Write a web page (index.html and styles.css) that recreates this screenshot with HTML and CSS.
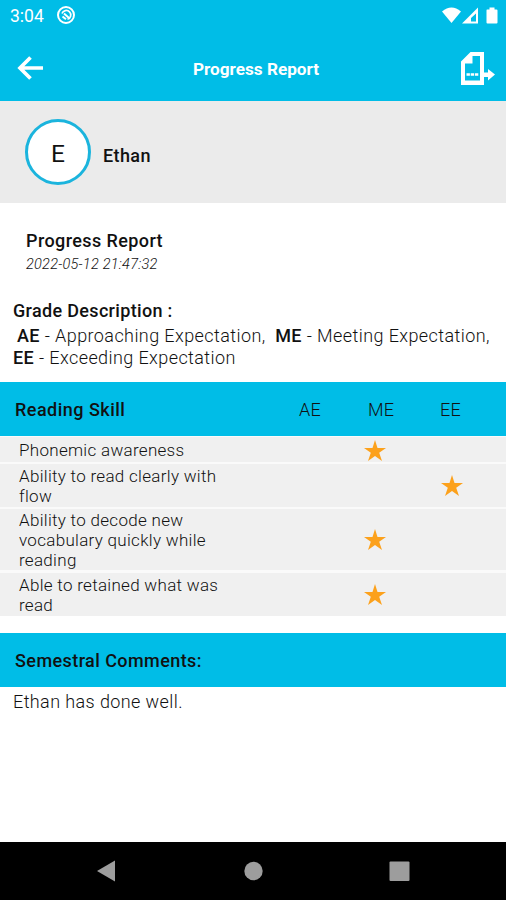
FILE: index.html
```html
<!DOCTYPE html>
<html lang="en">
<head>
<meta charset="utf-8">
<title>Progress Report</title>
<link rel="stylesheet" href="styles.css">
</head>
<body>
<div class="screen">
  <header class="top">
    <div class="status">
      <span class="clock">3:04</span>
      <svg class="status-app" width="20" height="20" viewBox="0 0 20 20" fill="none" stroke="#fff"><circle cx="10" cy="10" r="8" stroke-width="2"/><path d="M6 8.500A4.500 4.500 0 1 1 11.500 14.300" stroke-width="1.700"/><path d="M6.500 11.500L10 14.300M8 8.500L13 13" stroke-width="2"/></svg>
      <svg class="status-icons" width="56" height="18" viewBox="0 0 56 18" fill="#fff"><path d="M0 4.500Q9.500-3.500 19 4.500L9.500 16Z"/><path fill-rule="evenodd" d="M20 16.500L36 .5V16.500ZM29 14.500H34V6.500L29 11Z"/><path d="M45 2.500h2.500V.5h5v2h2q1 0 1 1V15.500q0 1-1 1h-9q-1 0-1-1V3.500q0-1 .5-1Z"/></svg>
    </div>
    <div class="appbar">
      <svg class="back" width="27" height="24" viewBox="0 0 27 24" fill="none" stroke="#fff" stroke-width="3.700"><path d="M13.500 1.500L3 12L13.500 22.500M3 12H26"/></svg>
      <h1 class="title">Progress Report</h1>
      <svg class="export" width="34" height="34" viewBox="0 0 34 34" fill="#fff"><path fill-rule="evenodd" d="M9.500 0H23V33H0V9.500ZM11.500 4V11.500H4V28.500H19V4Z"/><path d="M20 20.500H27V17L34 22.500L27 28.500V25H20Z"/><path d="M5.500 22.500H17.500" stroke="#fff" stroke-width="2.600" stroke-dasharray="3.400 .8"/></svg>
    </div>
  </header>
  <section class="student">
    <div class="avatar">E</div>
    <div class="name">Ethan</div>
  </section>
  <section class="summary">
    <h2 class="report">Progress Report</h2>
    <div class="date">2022-05-12 21:47:32</div>
    <h2 class="grades">Grade Description :</h2>
    <p class="legend"><span class="line first"><b>AE</b> - Approaching Expectation,&nbsp; <b>ME</b> - Meeting Expectation,</span><span class="line second"><b>EE</b> - Exceeding Expectation</span></p>
  </section>
  <section class="skills">
    <div class="row head"><b class="skill-head">Reading Skill</b><span class="ae">AE</span><span class="me">ME</span><span class="ee">EE</span></div>
    <div class="row r1"><span class="skill">Phonemic awareness</span><svg class="star" viewBox="0 0 22 21"><path d="M11 0L13.500 7.900L22 8L15.200 12.800L18 21L11 16L4 21L6.800 12.800L0 8L8.500 7.900Z"/></svg></div>
    <div class="row r2"><span class="skill">Ability to read clearly with<br>flow</span><svg class="star exceeding" viewBox="0 0 22 21"><path d="M11 0L13.500 7.900L22 8L15.200 12.800L18 21L11 16L4 21L6.800 12.800L0 8L8.500 7.900Z"/></svg></div>
    <div class="row r3"><span class="skill">Ability to decode new<br>vocabulary quickly while<br>reading</span><svg class="star" viewBox="0 0 22 21"><path d="M11 0L13.500 7.900L22 8L15.200 12.800L18 21L11 16L4 21L6.800 12.800L0 8L8.500 7.900Z"/></svg></div>
    <div class="row r4"><span class="skill">Able to retained what was<br>read</span><svg class="star" viewBox="0 0 22 21"><path d="M11 0L13.500 7.900L22 8L15.200 12.800L18 21L11 16L4 21L6.800 12.800L0 8L8.500 7.900Z"/></svg></div>
  </section>
  <section class="comments">
    <h2 class="comments-head">Semestral Comments:</h2>
    <p class="comment">Ethan has done well.</p>
  </section>
  <nav class="navbar">
    <svg width="506" height="58" viewBox="0 0 506 58" fill="#9d9d9d"><path d="M97 29L115 18.500V39.500Z"/><circle cx="253.500" cy="29" r="9.200"/><rect x="389.500" y="19.500" width="20" height="19.500" rx="1"/></svg>
  </nav>
</div>
</body>
</html>
```
FILE: styles.css
```css
* { box-sizing: border-box; }
body { margin: 0; background: #fff; font-family: Roboto, sans-serif; color: #111; }
h1, h2, p { margin: 0; }
b, h1, h2 { font-weight: 500; }
.screen { width: 506px; height: 900px; display: flex; flex-direction: column; overflow: hidden; }
.top { height: 101px; flex: none; background: #00bde7; color: #fff; }
.status { height: 36px; display: flex; align-items: flex-start; padding: 5px 8px 0 10px; }
.clock { font-size: 17.5px; line-height: 22px; width: 46px; }
.status-app { flex: none; }
.status-icons { margin: 2px 0 0 auto; }
.appbar { height: 65px; display: flex; align-items: flex-start; justify-content: space-between; padding: 16px 11px 0 17px; }
.back { margin-top: 4px; width: 27px; }
.title { font-size: 17.2px; line-height: 22px; margin: 6px 0 0 7px; font-weight: 700; white-space: nowrap; }
.student { height: 102px; flex: none; background: #ebebeb; display: flex; padding: 18px 25px; }
.avatar { width: 66px; height: 66px; border-radius: 50%; background: #fff; border: 3px solid #1bb4dd; font-size: 24.5px; line-height: 63px; text-align: center; }
.name { font-size: 18px; font-weight: 500; line-height: 22px; margin: 26px 0 0 12px; letter-spacing: .4px; }
.summary { height: 179px; flex: none; padding: 27px 13px 0; }
.report { font-size: 18px; line-height: 22px; margin-left: 13px; letter-spacing: .4px; }
.date { font-size: 14.5px; font-style: italic; font-weight: 300; line-height: 20px; margin: 3px 0 0 13px; letter-spacing: .25px; }
.grades { font-size: 18px; line-height: 22px; margin-top: 25px; letter-spacing: .33px; }
.legend { font-size: 18px; font-weight: 300; line-height: 22px; margin-top: 3px; letter-spacing: .41px; }
.line { display: block; white-space: nowrap; }
.first { padding-left: 4px; }
.skills { flex: none; background: #fafafa; height: 234px; }
.row { display: flex; align-items: center; background: #f0f0f0; font-size: 17px; }
.head { height: 54px; background: #00bde7; padding: 1px 0 0 15px; font-size: 18px; margin-bottom: 1px; }
.skill-head { width: 284px; letter-spacing: .48px; }
.ae, .me, .ee { font-weight: 300; letter-spacing: .3px; }
.ae { width: 69px; }
.me { width: 72px; }
.skill { width: 345px; font-weight: 300; line-height: 20px; letter-spacing: .3px; }
.r1, .r2, .r3, .r4 { padding-left: 19px; }
.r1 { height: 25px; margin-bottom: 2px; padding-top: 1px; }
.r2 { height: 43px; margin-bottom: 2px; }
.r3 { height: 61px; margin-bottom: 3px; }
.r4 { height: 43px; }
.star { width: 22px; height: 21px; flex: none; fill: #fca11c; }
.exceeding { margin-left: 77px; }
.comments { margin-top: 17px; height: 209px; flex: none; }
.comments-head { height: 54px; background: #00bde7; padding: 17px 15px 0; font-size: 18px; line-height: 22px; letter-spacing: .42px; }
.comment { padding: 4px 13px; font-size: 18px; font-weight: 300; line-height: 22px; letter-spacing: .4px; }
.navbar { height: 58px; flex: none; background: #000; }
```
